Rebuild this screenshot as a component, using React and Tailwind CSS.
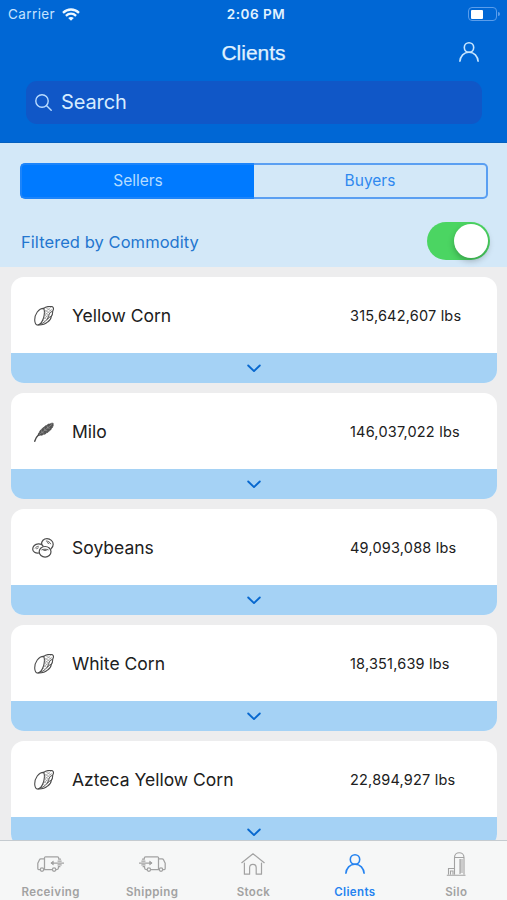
import React, { useState } from 'react';

const PersonIcon = ({ className }) => (
  <svg viewBox="0 0 20 20" className={className} fill="none" stroke="currentColor" strokeWidth="1.600">
    <circle cx="10" cy="5.500" r="4.700" />
    <path d="M.8 19.800C1.200 14 4.900 10.200 10 10.200s8.800 3.800 9.200 9.600" />
  </svg>
);

const CornIcon = () => (
  <svg viewBox="0 0 20 20" className="ml-px size-5" fill="none" stroke="#4a4a4a" strokeWidth="1.100" strokeLinecap="round" strokeLinejoin="round">
    <path d="M9.800 2.400C4.600 2.200.6 8.400.7 14c.1 3 1.200 5.200 3.100 5 4.500-.5 8-10.500 6-16.600z" />
    <path d="M9.200 2.600C11.600.9 16 .1 18.600.8c1.100 1 .9 2.900.1 4.300.1 2.200-.4 3.900-1.400 5.200-.2 2.300-1.300 4.300-3.600 5.600-2.400 2.200-6 3.300-9.600 3.100" />
    <path d="M18 5.500c-2 .6-2.700 2-3.200 4-.6 3-3 6.400-8 8.700M17 10.500c-1.400.3-2.600 1.200-3.400 2.600" strokeWidth="1" />
    <path d="M12 1.900 17.300 5M10.800 4l5 3.200M10.700 6.500l4 2.600M10.500 9l3.700 2.400M9.900 11.500l3 2M9 14l2 1.500M16.800 1.200l-6 5.200M17.500 3.500l-7 6M15 8.500l-5.500 4.700" stroke="#888" strokeWidth="0.600" />
  </svg>
);

const MiloIcon = () => (
  <svg viewBox="0 0 20 20" className="ml-px size-5" fill="none" stroke="#484848" strokeLinecap="round" strokeLinejoin="round">
    <path d="M.7 19.200c.8-2.700 2.300-5.200 4.600-7.300" strokeWidth="1.400" />
    <path
      d="M4.500 13.200c-.4-1.300.1-2.600 1.200-3.300.1-1.200.9-2.100 2.100-2.400.3-1.200 1.200-2 2.400-2.200.5-1.200 1.500-1.900 2.700-1.900.7-1.100 1.900-1.600 3-1.300.9-.8 2.200-1.100 3.300-.8l-.2 1c.6.4.5 1.100-.2 1.700.1 1.200-.5 2-1.500 2.400-.2 1.300-1 2.200-2.200 2.400-.5 1.200-1.400 1.900-2.600 1.900-.8 1.200-1.800 1.700-3 1.500-.8.9-2.200 1.300-3.400.8-.5.500-1.100.6-1.600.2z"
      fill="#555"
      strokeWidth="0.700"
    />
    <path d="M5.600 12.400 18 2.300M7.500 8.800l.4 1.800 2 .5M10.200 6.400l.5 1.900 2.200.4M13.200 4.200l.4 1.800 2 .2" stroke="#a8a8a8" strokeWidth="0.500" />
  </svg>
);

const SoyIcon = () => (
  <svg viewBox="0 0 22 20" className="-ml-px h-5 w-[22px]" fill="none" stroke="#4d4d4d" strokeWidth="1.200" strokeLinecap="round">
    <path d="M9.600 6.300C9.400 3 11.700.7 15 .7c3.400 0 6.200 2.600 6.200 5.600 0 1.700-.7 3.300-2.100 4.500" />
    <path d="M6.900 15C3.500 15.500.8 13.800.7 11.200.6 8.300 3.100 6 6.300 5.900c2.500-.1 4.200.8 4.800 2.400" />
    <ellipse cx="13.100" cy="13.800" rx="5.900" ry="5.300" />
    <path d="M3.300 10.100c.6-1.100 1.700-1.700 3-1.800M4.600 10.700l1.600-.8M14.300 3c1.900 0 3.600 1 4.300 2.800M15.300 4.600l1.500.9M9.800 11.800c1.500-.8 4.700-.8 6.400 0M11.800 12.400h2.400" strokeWidth="0.900" />
  </svg>
);

// Drawn facing left; the outbound truck is mirrored, its arrow runs into the box.
const TruckIcon = ({ outbound = false }) => (
  <svg viewBox="0 0 27 16" className="h-4 w-[27px]" fill="none" stroke="currentColor" strokeWidth="1.250" strokeLinejoin="round" strokeLinecap="round">
    <g transform={outbound ? 'translate(27 0) scale(-1 1)' : undefined}>
      <path d="M3.200 13.600H1.700c-.6 0-.9-.4-.9-1V7.200l1.700-3.500c.3-.6.7-.8 1.300-.8h3.700v10.700M7.500 13.600H6.800M7.500 2.900V1.700c0-.5.4-.8.9-.8H20.500c.7 0 1.200.3 1.200 1v1.300h1.800M6.800 13.600h8.500M19 13.600h.6c.8 0 1.800-.7 1.800-1.500v-1.400h1.500" />
      <circle cx="5" cy="13.600" r="1.700" fill="#f6f7f7" />
      <circle cx="17.100" cy="13.600" r="1.700" fill="#f6f7f7" />
      <path d="M21 5h3.200M21 8.900h3.200M14.500 7h12" />
      <path d="m16 5.400-2.100 1.600 2.100 1.600z" fill="currentColor" strokeWidth="0.900" />
    </g>
  </svg>
);

const HomeIcon = () => (
  <svg viewBox="0 0 24 22" className="h-[22px] w-6" fill="none" stroke="currentColor" strokeWidth="1.200" strokeLinejoin="round" strokeLinecap="round">
    <path d="M.8 9.700 12 .8l11.200 8.900M3.400 10v11.200h5.200v-6.400c0-4.600 6.600-4.600 6.600 0v6.400h5.300V10" />
  </svg>
);

const SiloIcon = () => (
  <svg viewBox="0 0 20 24" className="h-6 w-5" fill="none" stroke="currentColor" strokeWidth="1.100">
    <path d="M8.500 22.500V5.500c0-6.400 9.500-6.400 9.500 0v17M8.500 5.500H18M.8 23.200h18.700M2.500 22.500v-6h6M4.500 22.500V19H7v3.500" />
    <path d="M13.500 8h3.500M13.500 10h3.500M13.500 12h3.500M13.500 14h3.500M13.500 16h3.500M13.500 18h3.500M13.500 20h3.500M14 7v15" />
  </svg>
);

const commodities = [
  { name: 'Yellow Corn', amount: '315,642,607 lbs', icon: CornIcon },
  { name: 'Milo', amount: '146,037,022 lbs', icon: MiloIcon },
  { name: 'Soybeans', amount: '49,093,088 lbs', icon: SoyIcon },
  { name: 'White Corn', amount: '18,351,639 lbs', icon: CornIcon },
  { name: 'Azteca Yellow Corn', amount: '22,894,927 lbs', icon: CornIcon },
];

const tabs = [
  { label: 'Receiving', icon: <TruckIcon /> },
  { label: 'Shipping', icon: <TruckIcon outbound /> },
  { label: 'Stock', icon: <HomeIcon /> },
  { label: 'Clients', icon: <PersonIcon className="size-5" /> },
  { label: 'Silo', icon: <SiloIcon /> },
];

const StatusBar = () => (
  <div className="grid h-7 grid-cols-3 items-center pl-2 pr-[7px] text-[13px]">
    <div className="flex items-center gap-[7px] text-[#c5e3ff]">
      <span className="text-[13.500px] tracking-[0.4px]">Carrier</span>
      <svg viewBox="0 0 18 13" className="h-[13px] w-[18px]" fill="none" stroke="#eef8ff" strokeWidth="2.300">
        <path d="M1 4.800c4.600-4.400 11.400-4.400 16 0M3.900 7.800c3-2.800 7.200-2.800 10.200 0" />
        <path d="M6.200 10c1.700-1.500 3.900-1.500 5.600 0L9 12.800z" fill="#eef8ff" stroke="none" />
      </svg>
    </div>
    <span className="pl-1 pt-px text-center text-[13.500px] font-semibold tracking-[0.5px] text-[#e2f3ff]">2:06 PM</span>
    <div className="flex items-center justify-end gap-px">
      <div className="h-3.5 w-[29px] rounded-[4px] border border-[#5a9deb] p-[1.500px]">
        <div className="h-full w-3 rounded-[1px] bg-white" />
      </div>
      <div className="h-1 w-0.5 rounded-r bg-[#5a9deb]" />
    </div>
  </div>
);

const CommodityCard = ({ name, amount, icon: Icon }) => (
  <div className="h-[106px] shrink-0 overflow-hidden rounded-[13px] bg-white">
    <div className="flex h-[76px] items-center pt-0.5 text-[#202020]">
      <div className="flex w-[61px] items-center pl-[22px]">
        <Icon />
      </div>
      <span className="flex-1 text-[17.500px]">{name}</span>
      <span className="w-[147px] text-[14.500px] tracking-[0.2px]">{amount}</span>
    </div>
    <button className="flex h-[30px] w-full items-center justify-center bg-[#a5d2f5] text-[#0868cf]">
      <svg viewBox="0 0 14 8" className="h-2 w-3.5" fill="none" stroke="currentColor" strokeWidth="1.900" strokeLinecap="round" strokeLinejoin="round">
        <path d="m1.200 1.500 5.800 5.600 5.800-5.600" />
      </svg>
    </button>
  </div>
);

export default function App() {
  const [side, setSide] = useState('Sellers');
  const [filtered, setFiltered] = useState(true);
  const [tab, setTab] = useState('Clients');

  return (
    <div className="flex h-[900px] w-[507px] flex-col overflow-hidden bg-[#ededee] font-[Inter,sans-serif]">
      <header className="h-[143px] shrink-0 border-b border-[#0460bf] bg-[#0067d5]">
        <StatusBar />
        <div className="grid h-[53px] grid-cols-[60px_1fr_60px] items-center pb-[5px]">
          <h1 className="col-start-2 pt-px text-center font-['Liberation_Sans',sans-serif] text-[21px] text-[#e0f2ff] [-webkit-text-stroke:0.25px_#e0f2ff]">Clients</h1>
          <button className="pl-3 text-[#c8e6ff]">
            <PersonIcon className="size-5" />
          </button>
        </div>
        <div className="ml-[26px] mr-[25px] flex h-[43px] items-center gap-[9px] rounded-[11px] bg-[#1057c7] pl-[9px]">
          <svg viewBox="0 0 17 17" className="size-[17px]" fill="none" stroke="#b9dcff" strokeWidth="1.400" strokeLinecap="round">
            <circle cx="7" cy="7" r="6.200" />
            <path d="m11.700 11.700 4.500 4.500" />
          </svg>
          <input
            placeholder="Search"
            className="flex-1 bg-transparent pb-0.5 text-[20px] tracking-[-0.1px] text-[#d6ecff] outline-none placeholder:text-[#d6ecff]"
          />
        </div>
      </header>

      <section className="h-[124px] shrink-0 bg-[#d3e8f8] px-5 pt-5">
        <div className="flex h-9 w-[468px] text-[15.500px]">
          {['Sellers', 'Buyers'].map((label) => (
            <button
              key={label}
              onClick={() => setSide(label)}
              className={`flex-1 border-y-2 first:rounded-l-[5px] first:border-l-2 last:rounded-r-[5px] last:border-r-2 ${
                side === label ? 'border-[#1c84fa] bg-[#007aff] text-[#b5dcff]' : 'border-[#5a9ff2] text-[#2f88ef]'
              }`}
            >
              {label}
            </button>
          ))}
        </div>
        <div className="mt-[23px] flex h-[38px] w-[470px] items-center justify-between">
          <span className="pl-px pt-0.5 text-[16.500px] tracking-[0.060px] text-[#2376cf]">Filtered by Commodity</span>
          <button
            role="switch"
            aria-checked={filtered}
            onClick={() => setFiltered(!filtered)}
            className={`flex h-[38px] w-[63px] items-center rounded-full px-0.5 ${filtered ? 'justify-end bg-[#4bd562]' : 'bg-gray-300'}`}
          >
            <span className="size-[34px] rounded-full bg-white shadow-[0_3px_6px_rgba(0,0,0,0.25)]" />
          </button>
        </div>
      </section>

      <main className="flex min-h-0 flex-1 flex-col gap-2.5 overflow-hidden pl-[11px] pr-2.5 pt-2.5">
        {commodities.map((item) => (
          <CommodityCard key={item.name} {...item} />
        ))}
      </main>

      <nav className="grid h-[60px] shrink-0 grid-cols-5 border-t border-[#c5cbd0] bg-[#f6f7f7]">
        {tabs.map(({ label, icon }) => (
          <button
            key={label}
            onClick={() => setTab(label)}
            className={`flex flex-col items-center ${tab === label ? 'text-[#2583f0]' : 'text-[#a2a2a2]'}`}
          >
            <span className="flex h-[43px] items-center justify-center pt-0.5">{icon}</span>
            <span className="text-[11.500px] font-semibold leading-4 tracking-[0.4px]">{label}</span>
          </button>
        ))}
      </nav>
    </div>
  );
}
